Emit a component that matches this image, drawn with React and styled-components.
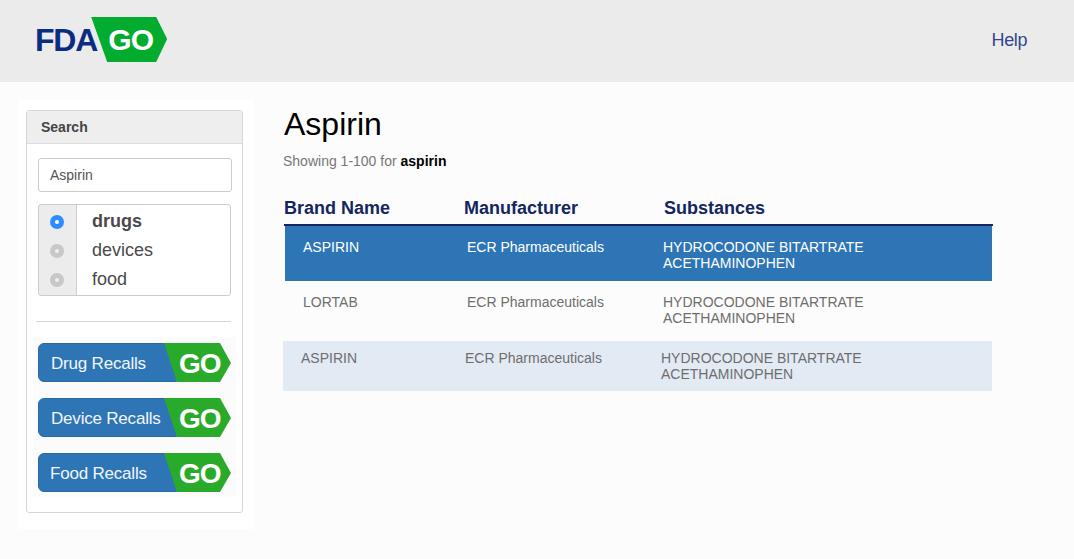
import React from "react";
import styled, { createGlobalStyle } from "styled-components";

const GlobalStyle = createGlobalStyle`
  html, body {
    margin: 0;
    padding: 0;
    height: 100%;
    background: #fcfcfc;
    font-family: "Liberation Sans", Arial, sans-serif;
    overflow: hidden;
  }
`;

const Header = styled.header`
  height: 82px;
  background: #ebebeb;
  display: flex;
  align-items: center;
  justify-content: space-between;
  padding: 0 47px 0 35px;
`;

const Logo = styled.div`
  display: flex;
  align-items: center;
  height: 45px;
  margin-top: -3px;
`;

const LogoFda = styled.span`
  font-size: 32px;
  font-weight: 700;
  letter-spacing: -1.2px;
  color: #0a2d82;
  position: relative;
  top: 1px;
`;

const LogoGo = styled.span`
  width: 76px;
  height: 45px;
  margin-left: -6px;
  box-sizing: border-box;
  padding-left: 17px;
  background: #03ab2e;
  clip-path: polygon(0 0, 65px 0, 76px 22px, 65px 45px, 16px 45px);
  color: #fff;
  font-size: 30px;
  font-weight: 700;
  letter-spacing: -0.8px;
  line-height: 46px;
`;

const HelpLink = styled.a`
  font-size: 18px;
  letter-spacing: -0.4px;
  color: #33478b;
  margin-top: -1px;
`;

const Page = styled.div`
  display: flex;
  align-items: flex-start;
`;

const SidePanel = styled.aside`
  width: 236px;
  margin: 18px 0 0 18px;
  padding: 10px 11px 16px 8px;
  box-sizing: border-box;
  background: #fff;
`;

const Card = styled.section`
  border: 1px solid #d6d6d6;
  border-radius: 3px;
  height: 403px;
  box-sizing: border-box;
`;

const CardTitle = styled.h3`
  margin: 0;
  height: 33px;
  padding-left: 14px;
  background: #eeeeee;
  border-bottom: 1px solid #dcdcdc;
  box-sizing: border-box;
  font-size: 14px;
  line-height: 32px;
  color: #444;
`;

const CardBody = styled.div`
  padding: 14px 10px 0 11px;
`;

const SearchInput = styled.input`
  display: block;
  width: 194px;
  height: 34px;
  box-sizing: border-box;
  border: 1px solid #cccccc;
  border-radius: 3px;
  padding: 0 11px;
  font: 14px "Liberation Sans", Arial, sans-serif;
  color: #555;
  background: #fff;
`;

const RadioGroup = styled.div`
  width: 193px;
  height: 92px;
  margin-top: 12px;
  box-sizing: border-box;
  border: 1px solid #cccccc;
  border-radius: 3px;
  overflow: hidden;
  background: linear-gradient(to right, #ececec 37px, #cfcfcf 37px, #cfcfcf 38px, #fff 38px);
  padding-top: 2px;
`;

const RadioRow = styled.div`
  height: 29px;
  display: flex;
  align-items: center;
  padding-left: 11px;
  font-size: 18px;
  font-weight: ${(p) => (p.$active ? 700 : 400)};
  color: #4a4a4a;
`;

const RadioDot = styled.span`
  width: 14px;
  height: 14px;
  border-radius: 50%;
  background: ${(p) => (p.$active ? "#2d8cff" : "#c8c8c8")};
  margin-right: 28px;
  display: flex;
  align-items: center;
  justify-content: center;

  &::after {
    content: "";
    width: 4px;
    height: 4px;
    border-radius: 50%;
    background: #fff;
    opacity: ${(p) => (p.$active ? 1 : 0.7)};
  }
`;

const Divider = styled.hr`
  width: 195px;
  margin: 25px 0 0 -2px;
  border: none;
  border-top: 1px solid #d4d4d4;
`;

const RecallList = styled.div`
  margin: 15px -4px 0 -5px;
  padding: 6px 4px 5px 5px;
  background: #fbfbfb;
  display: flex;
  flex-direction: column;
  gap: 16px;
`;

const RecallButton = styled.a`
  display: flex;
  width: 193px;
  height: 39px;
`;

const RecallLabel = styled.span`
  width: 139px;
  flex: none;
  box-sizing: border-box;
  padding-left: ${(p) => p.$indent}px;
  background: #2e75b6;
  border: 1px solid #2a69a8;
  border-radius: 6px 0 0 6px;
  color: #f2f6fa;
  font-size: 17px;
  letter-spacing: -0.2px;
  line-height: 40px;
`;

const RecallGo = styled.span`
  width: 67px;
  flex: none;
  margin-left: -13px;
  box-sizing: border-box;
  padding-left: 15px;
  background: #2aaa2a;
  clip-path: polygon(0 0, 56px 0, 67px 20px, 56px 39px, 13px 39px);
  color: #fff;
  font-size: 28px;
  font-weight: 700;
  letter-spacing: -1px;
  line-height: 41px;
`;

const Main = styled.main`
  margin-left: 29px;
  width: 710px;
`;

const Title = styled.h1`
  margin: 23px 0 0 1px;
  font-size: 32px;
  font-weight: 400;
  line-height: 38px;
  color: #000;
`;

const Summary = styled.p`
  margin: 8px 0 0 0;
  font-size: 14px;
  line-height: 20px;
  color: #777;

  b {
    color: #000;
  }
`;

const ColumnHead = styled.div`
  display: grid;
  grid-template-columns: 180px 200px 1fr;
  margin: 25px 0 0 1px;
  padding-bottom: 4px;
  border-bottom: 2px solid #14265f;
  font-size: 18px;
  line-height: 24px;
  font-weight: 700;
  color: #14265f;
`;

const Row = styled.div`
  display: grid;
  grid-template-columns: 164px 196px 1fr;
  box-sizing: border-box;
  width: ${(p) => p.$width}px;
  height: ${(p) => p.$height}px;
  margin-left: ${(p) => p.$shift}px;
  padding: ${(p) => p.$top}px 0 0 18px;
  background: ${(p) => p.$bg};
  color: ${(p) => p.$color};
  font-size: 14px;
  line-height: 16px;
`;

const rows = [
  { name: "ASPIRIN", width: 707, height: 55, top: 13, shift: 2, bg: "#2e75b6", color: "#fff" },
  { name: "LORTAB", width: 707, height: 60, top: 13, shift: 2, bg: "transparent", color: "#6e6e6e" },
  { name: "ASPIRIN", width: 709, height: 50, top: 9, shift: 0, bg: "#e2eaf4", color: "#6e6e6e" },
];

const recalls = [
  { label: "Drug Recalls", indent: 12 },
  { label: "Device Recalls", indent: 12 },
  { label: "Food Recalls", indent: 11 },
];

export default function App() {
  return (
    <>
      <GlobalStyle />
      <Header>
        <Logo>
          <LogoFda>FDA</LogoFda>
          <LogoGo>GO</LogoGo>
        </Logo>
        <HelpLink>Help</HelpLink>
      </Header>
      <Page>
        <SidePanel>
          <Card>
            <CardTitle>Search</CardTitle>
            <CardBody>
              <SearchInput defaultValue="Aspirin" />
              <RadioGroup>
                {["drugs", "devices", "food"].map((label, i) => (
                  <RadioRow key={label} $active={i === 0}>
                    <RadioDot $active={i === 0} />
                    {label}
                  </RadioRow>
                ))}
              </RadioGroup>
              <Divider />
              <RecallList>
                {recalls.map((r) => (
                  <RecallButton key={r.label}>
                    <RecallLabel $indent={r.indent}>{r.label}</RecallLabel>
                    <RecallGo>GO</RecallGo>
                  </RecallButton>
                ))}
              </RecallList>
            </CardBody>
          </Card>
        </SidePanel>
        <Main>
          <Title>Aspirin</Title>
          <Summary>
            Showing 1-100 for <b>aspirin</b>
          </Summary>
          <ColumnHead>
            <span>Brand Name</span>
            <span>Manufacturer</span>
            <span>Substances</span>
          </ColumnHead>
          {rows.map((row, i) => (
            <Row
              key={i}
              $width={row.width}
              $height={row.height}
              $top={row.top}
              $shift={row.shift}
              $bg={row.bg}
              $color={row.color}
            >
              <span>{row.name}</span>
              <span>ECR Pharmaceuticals</span>
              <span>
                HYDROCODONE BITARTRATE
                <br />
                ACETHAMINOPHEN
              </span>
            </Row>
          ))}
        </Main>
      </Page>
    </>
  );
}
